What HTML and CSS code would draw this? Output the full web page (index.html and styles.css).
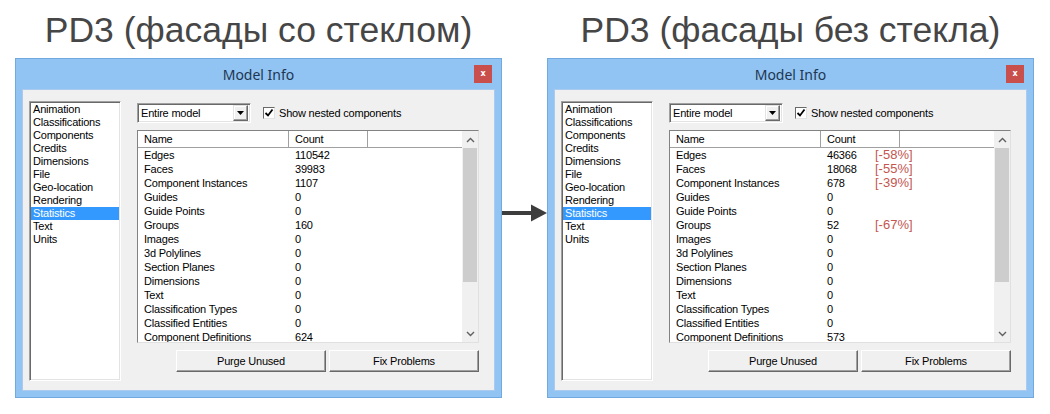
FILE: index.html
```html
<!DOCTYPE html>
<html>
<head>
<meta charset="utf-8">
<link rel="stylesheet" href="styles.css">
</head>
<body>
<div class="page">
  <div class="col">
    <h1 class="heading">PD3 (фасады со стеклом)</h1>
    <div class="win">
      <div class="titlebar"><span></span><span class="wtitle">Model Info</span><span class="close">x</span></div>
      <div class="panel">
        <ul class="cats">
          <li>Animation</li><li>Classifications</li><li>Components</li><li>Credits</li><li>Dimensions</li><li>File</li><li>Geo-location</li><li>Rendering</li><li class="sel">Statistics</li><li>Text</li><li>Units</li>
        </ul>
        <div class="main">
          <div class="toolbar">
            <div class="select"><span class="seltext">Entire model</span><span class="drop"><svg width="7" height="4" viewBox="0 0 7 4"><path d="M0 0H7L3.5 4Z" fill="#000"/></svg></span></div>
            <div class="chk"><span class="box"><svg width="10" height="10" viewBox="0 0 10 10"><path d="M1.5 5L4 7.5L8.5 1.5" fill="none" stroke="#000" stroke-width="1.8"/></svg></span><span>Show nested components</span></div>
          </div>
          <div class="table">
            <div class="grid">
              <div class="row head"><span class="c1">Name</span><span class="c2">Count</span><span class="c3"></span></div>
              <div class="row"><span class="c1">Edges</span><span class="c2">110542</span></div>
              <div class="row"><span class="c1">Faces</span><span class="c2">39983</span></div>
              <div class="row"><span class="c1">Component Instances</span><span class="c2">1107</span></div>
              <div class="row"><span class="c1">Guides</span><span class="c2">0</span></div>
              <div class="row"><span class="c1">Guide Points</span><span class="c2">0</span></div>
              <div class="row"><span class="c1">Groups</span><span class="c2">160</span></div>
              <div class="row"><span class="c1">Images</span><span class="c2">0</span></div>
              <div class="row"><span class="c1">3d Polylines</span><span class="c2">0</span></div>
              <div class="row"><span class="c1">Section Planes</span><span class="c2">0</span></div>
              <div class="row"><span class="c1">Dimensions</span><span class="c2">0</span></div>
              <div class="row"><span class="c1">Text</span><span class="c2">0</span></div>
              <div class="row"><span class="c1">Classification Types</span><span class="c2">0</span></div>
              <div class="row"><span class="c1">Classified Entities</span><span class="c2">0</span></div>
              <div class="row"><span class="c1">Component Definitions</span><span class="c2">624</span></div>
            </div>
            <div class="vscroll">
              <span class="arrow"><svg width="9" height="6" viewBox="0 0 9 6"><path d="M1 5L4.5 1.5L8 5" fill="none" stroke="#606060" stroke-width="1.4"/></svg></span>
              <span class="thumb"></span>
              <span class="track"></span>
              <span class="arrow"><svg width="9" height="6" viewBox="0 0 9 6"><path d="M1 1L4.5 4.5L8 1" fill="none" stroke="#606060" stroke-width="1.4"/></svg></span>
            </div>
          </div>
          <div class="buttons"><button class="btn">Purge Unused</button><button class="btn">Fix Problems</button></div>
        </div>
      </div>
    </div>
  </div>

  <div class="mid">
    <svg class="bigarrow" width="45" height="18" viewBox="0 0 45 18"><rect x="0" y="7" width="31" height="4" fill="#3d3d3d"/><path d="M29 0.5L45 9L29 17.5Z" fill="#3d3d3d"/></svg>
  </div>

  <div class="col">
    <h1 class="heading">PD3 (фасады без стекла)</h1>
    <div class="win">
      <div class="titlebar"><span></span><span class="wtitle">Model Info</span><span class="close">x</span></div>
      <div class="panel">
        <ul class="cats">
          <li>Animation</li><li>Classifications</li><li>Components</li><li>Credits</li><li>Dimensions</li><li>File</li><li>Geo-location</li><li>Rendering</li><li class="sel">Statistics</li><li>Text</li><li>Units</li>
        </ul>
        <div class="main">
          <div class="toolbar">
            <div class="select"><span class="seltext">Entire model</span><span class="drop"><svg width="7" height="4" viewBox="0 0 7 4"><path d="M0 0H7L3.5 4Z" fill="#000"/></svg></span></div>
            <div class="chk"><span class="box"><svg width="10" height="10" viewBox="0 0 10 10"><path d="M1.5 5L4 7.5L8.5 1.5" fill="none" stroke="#000" stroke-width="1.8"/></svg></span><span>Show nested components</span></div>
          </div>
          <div class="table">
            <div class="grid">
              <div class="row head"><span class="c1">Name</span><span class="c2">Count</span><span class="c3"></span></div>
              <div class="row"><span class="c1">Edges</span><span class="c2"><span class="num">46366</span><span class="pct">[-58%]</span></span></div>
              <div class="row"><span class="c1">Faces</span><span class="c2"><span class="num">18068</span><span class="pct">[-55%]</span></span></div>
              <div class="row"><span class="c1">Component Instances</span><span class="c2"><span class="num">678</span><span class="pct">[-39%]</span></span></div>
              <div class="row"><span class="c1">Guides</span><span class="c2">0</span></div>
              <div class="row"><span class="c1">Guide Points</span><span class="c2">0</span></div>
              <div class="row"><span class="c1">Groups</span><span class="c2"><span class="num">52</span><span class="pct">[-67%]</span></span></div>
              <div class="row"><span class="c1">Images</span><span class="c2">0</span></div>
              <div class="row"><span class="c1">3d Polylines</span><span class="c2">0</span></div>
              <div class="row"><span class="c1">Section Planes</span><span class="c2">0</span></div>
              <div class="row"><span class="c1">Dimensions</span><span class="c2">0</span></div>
              <div class="row"><span class="c1">Text</span><span class="c2">0</span></div>
              <div class="row"><span class="c1">Classification Types</span><span class="c2">0</span></div>
              <div class="row"><span class="c1">Classified Entities</span><span class="c2">0</span></div>
              <div class="row"><span class="c1">Component Definitions</span><span class="c2">573</span></div>
            </div>
            <div class="vscroll">
              <span class="arrow"><svg width="9" height="6" viewBox="0 0 9 6"><path d="M1 5L4.5 1.5L8 5" fill="none" stroke="#606060" stroke-width="1.4"/></svg></span>
              <span class="thumb"></span>
              <span class="track"></span>
              <span class="arrow"><svg width="9" height="6" viewBox="0 0 9 6"><path d="M1 1L4.5 4.5L8 1" fill="none" stroke="#606060" stroke-width="1.4"/></svg></span>
            </div>
          </div>
          <div class="buttons"><button class="btn">Purge Unused</button><button class="btn">Fix Problems</button></div>
        </div>
      </div>
    </div>
  </div>
</div>
</body>
</html>
```

FILE: styles.css
```css
* { box-sizing: border-box; }
html, body { margin: 0; padding: 0; background: #ffffff; }
body { width: 1050px; height: 414px; overflow: hidden; font-family: "Liberation Sans", Arial, sans-serif; }

.page { display: flex; align-items: flex-start; padding-left: 15px; }
.col { width: 487px; display: flex; flex-direction: column; }
.mid { width: 45px; padding-top: 204px; }
.bigarrow { display: block; }

.heading {
  margin: 0; height: 58px; line-height: 60px; text-align: center;
  font-family: "Liberation Sans", Arial, sans-serif; font-weight: normal;
  font-size: 35.5px; color: #464646; white-space: nowrap;
}

.win {
  height: 340px; background: #91c4f3; border: 1px solid #72a9de;
  padding: 0 6px 6px 6px; display: flex; flex-direction: column;
}
.titlebar {
  height: 30px; display: grid; grid-template-columns: 1fr auto 1fr; align-items: start;
}
.wtitle {
  font-family: "Noto Sans", "Open Sans", sans-serif; font-size: 14px; color: #1f3651;
  line-height: 30px; padding-top: 1px;
}
.close {
  justify-self: end; margin-top: 6px; margin-right: 3px; width: 18px; height: 18px;
  background: #c84f4b; color: #fff; font-family: "DejaVu Sans", sans-serif; font-size: 8px;
  font-weight: bold; line-height: 17px; text-align: center;
}

.panel {
  flex: 1; background: #f0f0f0; border: 1px solid #aacbee;
  display: flex; padding: 11px 15px 9px 6px;
  font-size: 11px; letter-spacing: -0.2px; color: #000;
}

.cats {
  list-style: none; margin: 0; width: 92px; height: 280px; background: #fff;
  border: 1px solid; border-color: #a0a0a0 #ffffff #ffffff #a0a0a0;
  box-shadow: inset 1px 1px 0 #696969, inset -1px -1px 0 #e3e3e3;
  padding: 1px 1px 0 1px;
}
.cats li { height: 13px; line-height: 13px; padding-left: 2px; white-space: nowrap; }
.cats li.sel { background: #3399ff; color: #fff; }

.main { margin-left: 16px; width: 342px; padding-top: 2px; display: flex; flex-direction: column; }

.toolbar { height: 20px; display: flex; align-items: center; }
.select {
  width: 114px; height: 20px; background: #fff; display: flex; align-items: center;
  border: 1px solid; border-color: #a0a0a0 #fff #fff #a0a0a0;
  box-shadow: inset 1px 1px 0 #696969, inset -1px -1px 0 #e3e3e3;
  padding: 2px;
}
.seltext { flex: 1; padding-left: 1px; }
.drop {
  width: 15px; height: 16px; background: #f0f0f0; display: flex; align-items: center; justify-content: center;
  border: 1px solid; border-color: #e3e3e3 #696969 #696969 #e3e3e3;
  box-shadow: inset -1px -1px 0 #a0a0a0, inset 1px 1px 0 #fff;
}
.drop svg { display: block; }
.chk { display: flex; align-items: center; margin-left: 12px; }
.box {
  width: 12px; height: 12px; background: #fff; margin-right: 4px;
  border: 1px solid; border-color: #696969 #e3e3e3 #e3e3e3 #696969;
  display: flex; align-items: center; justify-content: center;
}
.box svg { display: block; }

.table {
  margin-top: 7px; height: 213px; background: #fff; display: flex; overflow: hidden;
  border: 1px solid; border-color: #828282 #e0e0e0 #e0e0e0 #828282;
}
.grid { flex: 1; overflow: hidden; }
.row { display: grid; grid-template-columns: 151px 79px 1fr; height: 14px; line-height: 14px; white-space: nowrap; }
.row.head { height: 17px; line-height: 16px; border-bottom: 1px solid #a0a0a0; }
.c1 { padding-left: 6px; }
.c2 { padding-left: 6px; display: flex; overflow: visible; }
.head .c1, .head .c2 { border-right: 1px solid #a0a0a0; }
.num { width: 48px; flex: none; }
.pct { flex: none; font-size: 13px; color: #c4564f; letter-spacing: 0; }

.vscroll { width: 16px; background: #f0f0f0; display: flex; flex-direction: column; align-items: center; }
.vscroll .arrow { height: 17px; width: 16px; display: flex; align-items: center; justify-content: center; flex: none; }
.vscroll .arrow svg { display: block; }
.thumb { width: 14px; height: 134px; background: #cdcdcd; flex: none; }
.track { flex: 1; }

.buttons { margin-top: 7px; display: flex; justify-content: flex-end; gap: 3px; }
.btn {
  width: 150px; height: 22px; background: #f0f0f0; padding: 0; margin: 0;
  font-family: "Liberation Sans", Arial, sans-serif; font-size: 11px; letter-spacing: -0.2px; color: #000;
  border: 1px solid; border-color: #ffffff #696969 #696969 #ffffff;
  box-shadow: inset -1px -1px 0 #a0a0a0;
}
```
